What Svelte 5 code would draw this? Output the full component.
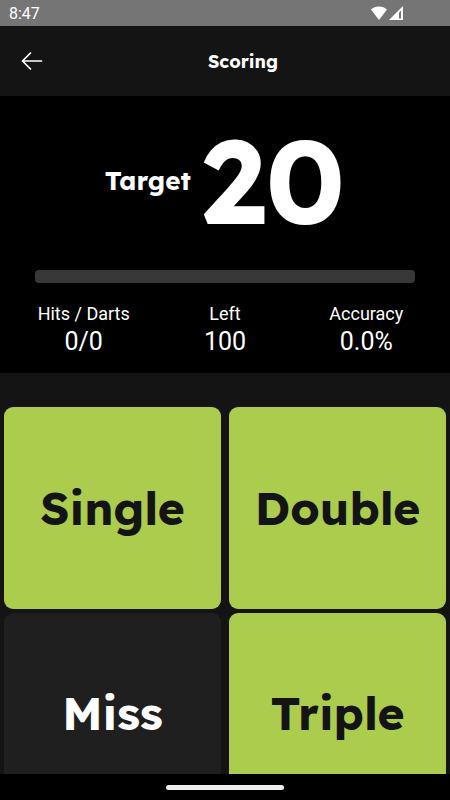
<script>
  let target = $state(20);
  let hits = $state(0);
  let darts = $state(0);
  const totalDarts = 100;

  let left = $derived(totalDarts - darts);
  let accuracy = $derived(darts ? ((hits / darts) * 100).toFixed(1) : '0.0');

  const scores = [
    { label: 'Single', value: 1 },
    { label: 'Double', value: 2 },
    { label: 'Miss', value: 0 },
    { label: 'Triple', value: 3 }
  ];

  function throwDart(value) {
    if (left === 0) return;
    darts += 1;
    if (value > 0) hits += 1;
  }
</script>

<div class="app">
  <div class="status-bar">
    <span>8:47</span>
    <div class="status-icons">
      <svg width="18" height="16" viewBox="0 0 18 16">
        <path d="M9 15 1 4.600Q4.200 1.500 9 1.500T17 4.600Z" fill="#fff" />
      </svg>
      <svg width="16" height="16" viewBox="0 0 16 16">
        <path d="M1 15 15 1V15Z" fill="#fff" />
        <path d="M11 7.500 13 5.500V13.500H11Z" fill="#757575" />
      </svg>
    </div>
  </div>

  <header>
    <button class="back" aria-label="Back">
      <svg width="22" height="20" viewBox="0 0 22 20" fill="none" stroke="#fff" stroke-width="1.700" stroke-linecap="round" stroke-linejoin="round">
        <path d="M20.500 10H1.500M9.500 2 1.500 10l8 8" />
      </svg>
    </button>
    <h1>Scoring</h1>
  </header>

  <section class="summary">
    <div class="target">
      <span class="target-label">Target</span>
      <span class="target-number">{target}</span>
    </div>
    <div class="progress" role="progressbar" aria-label="Darts thrown" aria-valuenow={darts} aria-valuemin="0" aria-valuemax={totalDarts}>
      <div class="progress-fill" style="width: {(darts / totalDarts) * 100}%"></div>
    </div>
    <dl class="stats">
      <div>
        <dt>Hits / Darts</dt>
        <dd>{hits}/{darts}</dd>
      </div>
      <div>
        <dt>Left</dt>
        <dd>{left}</dd>
      </div>
      <div>
        <dt>Accuracy</dt>
        <dd>{accuracy}%</dd>
      </div>
    </dl>
  </section>

  <main>
    {#each scores as score}
      <button class="score" class:miss={score.value === 0} onclick={() => throwDart(score.value)}>
        {score.label}
      </button>
    {/each}
  </main>

  <div class="nav-bar">
    <div class="handle"></div>
  </div>
</div>

<style>
  :global(body) {
    margin: 0;
    background: #141414;
  }

  .app {
    display: flex;
    flex-direction: column;
    height: 100vh;
    background: #141414;
    color: #fff;
    font-family: Roboto, sans-serif;
  }

  .status-bar {
    display: flex;
    flex-shrink: 0;
    align-items: center;
    justify-content: space-between;
    height: 26px;
    padding: 0 46px 0 9px;
    background: #757575;
    font-size: 16px;
  }

  .status-icons {
    display: flex;
  }

  header {
    display: grid;
    flex-shrink: 0;
    grid-template-columns: 40px 1fr;
    align-items: center;
    height: 70px;
    padding: 0 16px 0 12px;
  }

  .back {
    display: flex;
    align-items: center;
    justify-content: center;
    height: 40px;
    padding: 0;
    border: none;
    background: none;
    cursor: pointer;
  }

  h1 {
    margin: 0;
    font-family: Lexend, Lato, sans-serif;
    font-size: 18px;
    font-weight: 700;
    text-align: center;
  }

  .summary {
    flex-shrink: 0;
    padding: 14px 13px 15px;
    background: #000;
  }

  .target {
    display: flex;
    align-items: center;
    justify-content: center;
    gap: 10px;
    height: 140px;
    margin-bottom: 20px;
    font-family: Lexend, Lato, sans-serif;
    font-weight: 700;
  }

  .target-label {
    font-size: 26px;
  }

  .target-number {
    font-size: 118px;
    line-height: 140px;
  }

  .progress {
    height: 13px;
    margin: 0 22px 20px;
    border-radius: 4px;
    background: #383838;
    overflow: hidden;
  }

  .progress-fill {
    height: 100%;
    background: #abcc4c;
  }

  .stats {
    display: grid;
    grid-template-columns: repeat(3, 1fr);
    margin: 0;
    text-align: center;
  }

  dt {
    font-size: 18px;
    line-height: 22px;
  }

  dd {
    margin: 0;
    font-size: 25px;
    line-height: 33px;
  }

  main {
    display: grid;
    flex: 1;
    grid-template-columns: 1fr 1fr;
    grid-template-rows: 202px 199px;
    gap: 4px 8px;
    min-height: 0;
    padding: 34px 4px 0;
    overflow: hidden;
  }

  .score {
    padding: 0;
    border: none;
    border-radius: 9px;
    background: #abcc4c;
    color: #141414;
    font-family: Lexend, Lato, sans-serif;
    font-size: 46px;
    font-weight: 700;
    cursor: pointer;
  }

  .miss {
    background: #1f1f1f;
    color: #fff;
  }

  .nav-bar {
    display: flex;
    flex-shrink: 0;
    align-items: center;
    justify-content: center;
    height: 26px;
    background: #000;
  }

  .handle {
    width: 118px;
    height: 5px;
    border-radius: 3px;
    background: #eee;
  }
</style>
